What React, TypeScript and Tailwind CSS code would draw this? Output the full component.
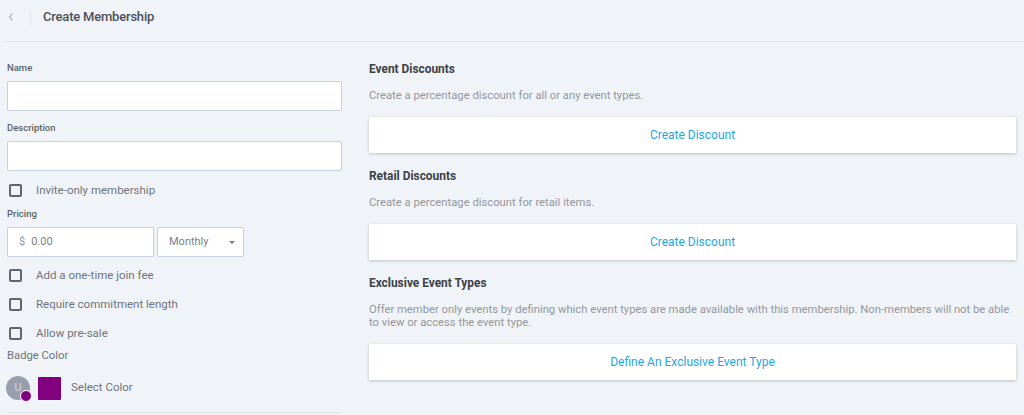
import React from 'react';

const Check: React.FC<{ label: string; className?: string }> = ({ label, className = '' }) => (
  <label className={`flex items-center h-[13px] pl-[9px] ${className}`}>
    <span className="w-[13px] h-[13px] border-2 border-[#5f656e] rounded-[2px] bg-transparent shrink-0" />
    <span className="ml-[14px] text-[11.5px] text-[#6f747c]">{label}</span>
  </label>
);

const Section: React.FC<{ title: string; text: string; action: string }> = ({ title, text, action }) => (
  <section>
    <h3 className="text-[11.9px] leading-[16px] font-bold text-[#3d4148]">{title}</h3>
    <p className="mt-[12px] text-[11.25px] leading-[13px] text-[#94979c]">{text}</p>
    <button className="mt-[15px] w-full h-[36px] bg-white shadow-[0_1px_3px_rgba(0,0,0,0.22)] text-[12px] text-[#1ea7e4]">
      {action}
    </button>
  </section>
);

export default function App() {
  return (
    <div className="w-[1024px] h-[415px] overflow-hidden bg-[#f0f4f8] font-['Roboto',sans-serif]">
      <header className="ml-[4px] h-[42px] border-b border-[#e2e6ea] flex items-center">
        <svg width="8" height="10" viewBox="0 0 8 10" className="ml-[3px] mb-[7px]" fill="none" stroke="#b4b9c0" strokeWidth="1.2">
          <path d="M5.5 1.5 2.5 5l3 3.5" />
        </svg>
        <div className="ml-[15px] mb-[7px] w-px h-[16px] bg-[#e4e8ec]" />
        <h1 className="ml-[12px] mb-[7px] text-[13px] tracking-[-0.2px] font-medium text-[#4c5159]">Create Membership</h1>
      </header>

      <div className="flex">
        <div className="w-[342px] shrink-0 pt-[20px]">
          <div className="pl-[7px] text-[9.5px] leading-[12px] font-medium text-[#5d6269]">Name</div>
          <div className="ml-[7px] mt-[7px] w-[335px] h-[30px] bg-white border border-[#ccd2dd] rounded-[1px]" />
          <div className="pl-[7px] mt-[11px] text-[9.5px] leading-[12px] font-medium text-[#5d6269]">Description</div>
          <div className="ml-[7px] mt-[7px] w-[335px] h-[30px] bg-white border border-[#ccd2dd] rounded-[1px]" />

          <Check label="Invite-only membership" className="mt-[13px]" />

          <div className="pl-[7px] mt-[11px] text-[9.5px] leading-[12px] font-medium text-[#5d6269]">Pricing</div>
          <div className="ml-[7px] mt-[7px] flex gap-[3px]">
            <div className="w-[147px] h-[30px] bg-white border border-[#ccd2dd] rounded-[1px] flex items-center pl-[11px] text-[11px] text-[#7b7f86]">
              <span className="text-[#94979c]">$</span>
              <span className="ml-[6px]">0.00</span>
            </div>
            <div className="w-[87px] h-[30px] bg-white border border-[#ccd2dd] rounded-[1px] flex items-center pl-[11px] text-[11px] text-[#7b7f86]">
              Monthly
              <span className="ml-[20px] w-0 h-0 border-x-[3px] border-x-transparent border-t-[3px] border-t-[#777c83]" />
            </div>
          </div>

          <Check label="Add a one-time join fee" className="mt-[12px]" />
          <Check label="Require commitment length" className="mt-[16px]" />
          <Check label="Allow pre-sale" className="mt-[16px]" />

          <div className="pl-[7px] mt-[9px] text-[11.25px] leading-[14px] text-[#6f747c]">Badge Color</div>
          <div className="ml-[6px] mt-[13px] flex items-center">
            <div className="relative w-[24px] h-[24px] rounded-full bg-[#9a9eac] flex items-center justify-center text-[11px] text-[#d5d7dd]">
              U
              <span className="absolute right-[-2px] bottom-[-2px] w-[12px] h-[12px] rounded-full bg-[#800080] border border-white" />
            </div>
            <div className="ml-[8px] w-[23px] h-[23px] bg-[#800080] rounded-[1px]" />
            <span className="ml-[10px] text-[11.5px] text-[#6f747c]">Select Color</span>
          </div>
          <div className="ml-[7px] mt-[12px] h-px bg-[#e2e6ea]" />
        </div>

        <div className="ml-[27px] w-[647px] pt-[19px] flex flex-col gap-[15px]">
          <Section title="Event Discounts" text="Create a percentage discount for all or any event types." action="Create Discount" />
          <Section title="Retail Discounts" text="Create a percentage discount for retail items." action="Create Discount" />
          <Section
            title="Exclusive Event Types"
            text="Offer member only events by defining which event types are made available with this membership. Non-members will not be able to view or access the event type."
            action="Define An Exclusive Event Type"
          />
        </div>
      </div>
    </div>
  );
}
